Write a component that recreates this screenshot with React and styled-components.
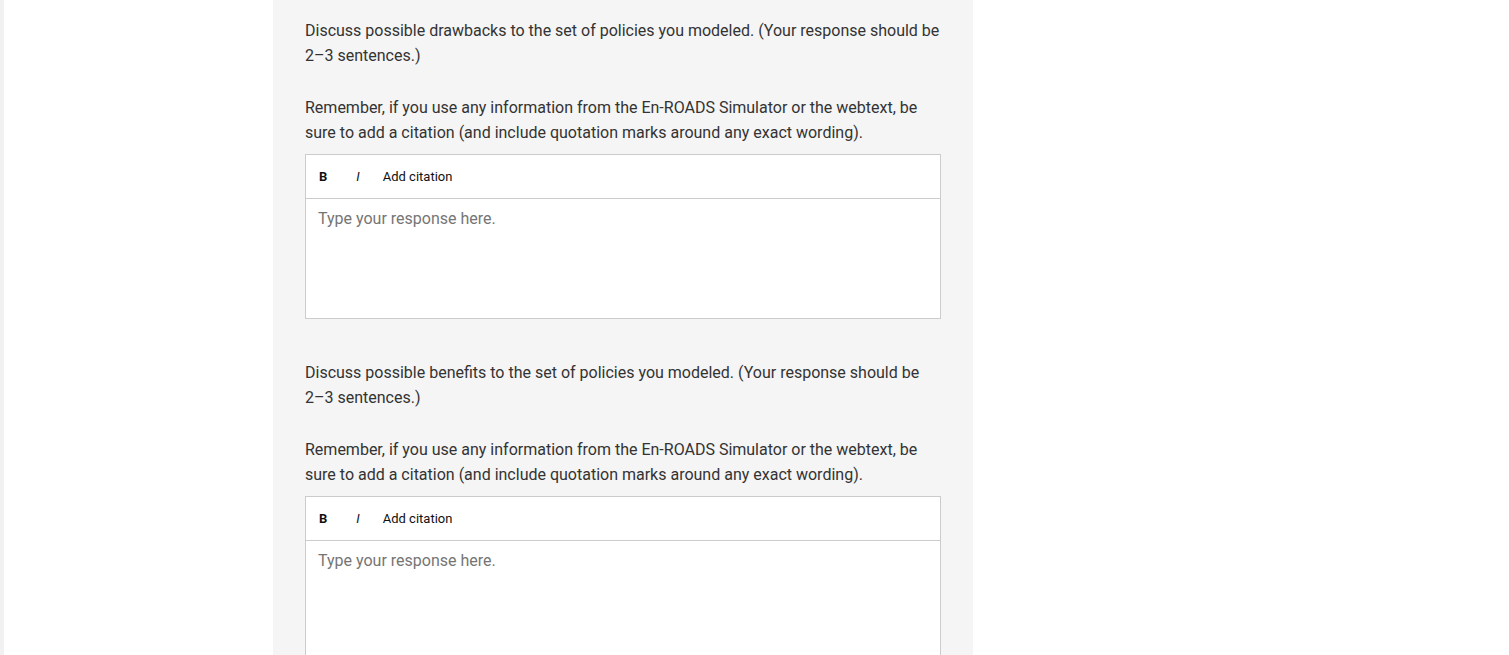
import React from 'react'
import styled, { createGlobalStyle } from 'styled-components'

const GlobalStyle = createGlobalStyle`
  html, body {
    margin: 0;
    padding: 0;
    background: #fff;
  }
  body {
    font-family: Roboto, "Liberation Sans", Arial, sans-serif;
    overflow: hidden;
  }
`

const prompts = [
  {
    id: 'drawbacks',
    question:
      'Discuss possible drawbacks to the set of policies you modeled. (Your response should be 2–3 sentences.)',
  },
  {
    id: 'benefits',
    question:
      'Discuss possible benefits to the set of policies you modeled. (Your response should be 2–3 sentences.)',
  },
]

const reminder =
  'Remember, if you use any information from the En-ROADS Simulator or the webtext, be sure to add a citation (and include quotation marks around any exact wording).'

const App = () => {
  return (
    <>
      <GlobalStyle />
      <Page>
        <Column>
          {prompts.map((p) => (
            <Question key={p.id}>
              <Prompt>{p.question}</Prompt>
              <Prompt>{reminder}</Prompt>
              <Editor>
                <Toolbar>
                  <ToolButton $bold $gap={29}>B</ToolButton>
                  <ToolButton $italic $gap={23}>I</ToolButton>
                  <ToolButton>Add citation</ToolButton>
                </Toolbar>
                <Body>
                  <Placeholder>Type your response here.</Placeholder>
                </Body>
              </Editor>
            </Question>
          ))}
        </Column>
      </Page>
    </>
  )
}

export default App

const Page = styled.div`
  height: 655px;
  border-left: 4px solid #f1f1f1;
  display: flex;
  padding-left: 269px;
  box-sizing: border-box;
`

const Column = styled.div`
  width: 700px;
  background: #f5f5f5;
  padding: 18px 32px 0 32px;
  box-sizing: border-box;
  display: flex;
  flex-direction: column;
  gap: 41px;
`

const Question = styled.section`
  display: flex;
  flex-direction: column;
`

const Prompt = styled.p`
  margin: 0 0 27px;
  font-size: 16px;
  line-height: 25px;
  color: #333;

  &:last-of-type {
    margin-bottom: 9px;
  }
`

const Editor = styled.div`
  border: 1px solid #cccccc;
  background: #fff;
`

const Toolbar = styled.div`
  height: 43px;
  display: flex;
  align-items: center;
  padding-left: 13px;
  border-bottom: 1px solid #cccccc;
`

const ToolButton = styled.span`
  font-size: 13px;
  color: #111;
  font-weight: ${(p) => (p.$bold ? 700 : 400)};
  font-style: ${(p) => (p.$italic ? 'italic' : 'normal')};
  margin-right: ${(p) => p.$gap || 0}px;
  cursor: pointer;
`

const Body = styled.div`
  height: 119px;
  padding: 8px 12px;
  box-sizing: border-box;
`

const Placeholder = styled.div`
  font-size: 16px;
  line-height: 24px;
  color: #757575;
`
